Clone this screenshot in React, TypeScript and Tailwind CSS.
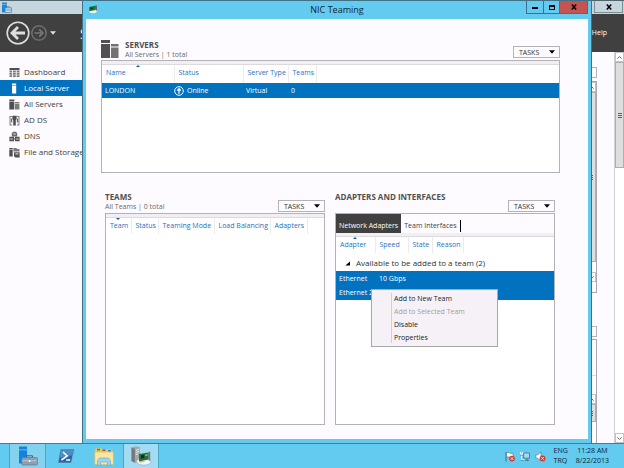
import React, { useState } from "react";

const navItems = [
  { id: "dashboard", label: "Dashboard" },
  { id: "local", label: "Local Server" },
  { id: "all", label: "All Servers" },
  { id: "adds", label: "AD DS" },
  { id: "dns", label: "DNS" },
  { id: "file", label: "File and Storage Services" },
];

const menuItems = [
  { label: "Add to New Team" },
  { label: "Add to Selected Team", disabled: true },
  { label: "Disable" },
  { label: "Properties" },
];

function NavIcon({ id, active }: { id: string; active: boolean }) {
  const fill = active ? "#ffffff" : "#505050";
  return (
    <svg viewBox="0 0 11 11" className="h-[11px] w-[11px] shrink-0" fill={fill} aria-hidden="true">
      {id === "dashboard" && (
        <>
          <path d="M0.5 1h10v2h-10z" />
          <path d="M0.5 3.6h2.6v1.8H0.5zM4 3.6h2.8v1.8H4zM7.7 3.6h2.8v1.8H7.7zM0.5 6h2.6v1.7H0.5zM4 6h2.8v1.7H4zM7.7 6h2.8v1.7H7.7zM0.5 8.3h2.6V10H0.5zM4 8.3h2.8V10H4zM7.7 8.3h2.8V10H7.7z" opacity="0.75" />
        </>
      )}
      {id === "local" && <path d="M3 0.6h4.2v1.6H3zM3 2.8h4.2v7.6H3z" />}
      {id === "all" && (
        <>
          <path d="M0.3 0.6h5v1.3h-5zM0.3 2.5h5v8h-5z" />
          <path d="M6 3h4.4v1.2H6zM6 4.8h4.4v5.7H6z" opacity="0.75" />
        </>
      )}
      {id === "adds" && (
        <>
          <path d="M0.5 1h3v1H1.6v7.4h1.6v1H0.5zM10.5 1h-3v1h1.9v7.4H7.8v1h2.7z" opacity="0.7" />
          <path d="M3.4 0.8h4.2v3.4L6.8 5v5.4H4.2V5l-0.8-0.8z" />
          <path d="M2.2 3.4h1v4h-1zM7.9 3.4h1v4h-1z" />
        </>
      )}
      {id === "dns" && (
        <>
          <path d="M2.8 5.4V2.6L4 0.8h3l1.2 1.8v2.8z" opacity="0.85" />
          <path d="M0.4 5.8h4.6v4.4H0.4zM6 5.8h4.6v4.4H6zM5 7.4h1v1.2H5z" />
          <path d="M1.4 7.4h2.4v1H1.4zM7.2 7.4h2.4v1H7.2zM4.3 2.4h2.4v1H4.3z" fill="#fdfbff" opacity="0.8" />
        </>
      )}
      {id === "file" && (
        <>
          <path d="M0.3 1h3.4v1.2H0.3zM0.3 2.8h3.4v6.8H0.3z" />
          <path d="M4.4 1h3l0.7 1h2.4v2.4H4.4z" opacity="0.75" />
          <path d="M5 5.2h5.6v5.3H6.4L5 9.2z" />
          <path d="M6.4 6.2h3v1.3h-3z" fill="#fdfbff" opacity="0.7" />
        </>
      )}
    </svg>
  );
}

function Caret({ className = "" }: { className?: string }) {
  return (
    <svg viewBox="0 0 6 4" className={`h-1 w-1.5 shrink-0 ${className}`} fill="currentColor" aria-hidden="true">
      <path d="M0 0.3h6L3 3.7z" />
    </svg>
  );
}

function TasksButton() {
  return (
    <button
      type="button"
      aria-haspopup="menu"
      className="flex h-3 w-[47px] items-center justify-between border border-[#b4b2b6] bg-[#fdfbff] pr-1 pl-[5px] text-[7px] leading-none text-[#303030]"
    >
      TASKS
      <Caret className="text-black" />
    </button>
  );
}

interface HeaderCellProps {
  label: string;
  width: string;
  sorted?: "up" | "down";
}

function HeaderCell({ label, width, sorted }: HeaderCellProps) {
  return (
    <th scope="col" className={`relative h-full border-r border-[#ecebee] pt-1 pl-1 text-left align-top font-normal whitespace-nowrap text-[#1f70bb] ${width}`}>
      {label}
      {sorted && (
        <svg viewBox="0 0 4 2" className="absolute top-0 left-1/2 h-[2px] w-1 -translate-x-1/2" fill="#0f5f9f" aria-hidden="true">
          {sorted === "up" ? <path d="M2 0l2 2H0z" /> : <path d="M0 0h4L2 2z" />}
        </svg>
      )}
    </th>
  );
}

// Thin shaded strip between the panel edge and its column headers
function Strip() {
  return <div className="h-1 border-b border-[#dcdadd] bg-[#f1eff3]" />;
}

function ServersPanel() {
  return (
    <section className="pr-7 pl-[15px]">
      <header className="flex h-[21px] items-start">
        <svg viewBox="0 0 18 19" className="mt-px h-[19px] w-[18px]" aria-hidden="true">
          <path d="M0 0h9v3H0zM0 4h9v14H0z" fill="#505050" />
          <path d="M10 4h7.5v2.4H10zM10 7.4h7.5V18H10z" fill="#727272" />
        </svg>
        <div className="ml-1.5 flex-1">
          <h2 className="text-[8px] leading-[11px] font-bold text-[#505050]">SERVERS</h2>
          <p className="text-[7px] leading-[10px] text-[#6a6a6a]">All Servers | 1 total</p>
        </div>
        <div className="self-end pb-[2px]">
          <TasksButton />
        </div>
      </header>
      <div className="h-[113px] border border-[#b4b2b6] bg-white">
        <Strip />
        <table className="w-full table-fixed border-collapse text-[7px] leading-none">
          <thead>
            <tr className="h-[18px]">
              <HeaderCell label="Name" width="w-[72px]" sorted="up" />
              <HeaderCell label="Status" width="w-[69px]" />
              <HeaderCell label="Server Type" width="w-[45px]" />
              <HeaderCell label="Teams" width="w-[28px]" />
              <th />
            </tr>
          </thead>
          <tbody>
            <tr className="h-[15px] bg-[#0072c0] text-white">
              <td className="pl-[3px]">LONDON</td>
              <td>
                <span className="flex items-center gap-[3px]">
                  <svg viewBox="0 0 10 10" className="h-[10px] w-[10px]" fill="none" stroke="#fff" aria-hidden="true">
                    <circle cx="5" cy="5" r="4.3" strokeWidth="1" />
                    <path d="M5 7.8V3M3.2 4.6L5 2.7l1.8 1.9" strokeWidth="1.3" />
                  </svg>
                  Online
                </span>
              </td>
              <td className="pl-[3px]">Virtual</td>
              <td className="pl-[3px]">0</td>
              <td />
            </tr>
          </tbody>
        </table>
      </div>
    </section>
  );
}

function TeamsPanel() {
  return (
    <section className="flex min-w-0 flex-1 flex-col">
      <header className="flex h-[22px] items-start justify-between">
        <div>
          <h2 className="text-[8px] leading-[11px] font-bold text-[#505050]">TEAMS</h2>
          <p className="text-[7px] leading-[10px] text-[#6a6a6a]">All Teams | 0 total</p>
        </div>
        <div className="self-end pb-px">
          <TasksButton />
        </div>
      </header>
      <div className="flex-1 border border-[#b4b2b6] bg-white">
        <Strip />
        <table className="w-full table-fixed border-collapse text-[7px] leading-none">
          <thead>
            <tr className="h-4">
              <HeaderCell label="Team" width="w-[25px]" sorted="down" />
              <HeaderCell label="Status" width="w-[27px]" />
              <HeaderCell label="Teaming Mode" width="w-[56px]" />
              <HeaderCell label="Load Balancing" width="w-[56px]" />
              <HeaderCell label="Adapters" width="w-[37px]" />
              <th />
            </tr>
          </thead>
        </table>
      </div>
    </section>
  );
}

function AdapterMenu() {
  return (
    <div role="menu" className="absolute top-[52px] left-[35px] flex w-[127px] border border-[#a9a7ab] bg-[#f6f1f6] py-0.5">
      <div className="my-px w-5 border-r border-[#d2ced3]" />
      <div className="flex flex-1 flex-col">
        {menuItems.map((item) => (
          <button
            key={item.label}
            type="button"
            role="menuitem"
            disabled={item.disabled}
            className="h-[13px] pl-0.5 text-left text-[7px] leading-[13px] text-[#1c1c1c] disabled:text-[#a09da2]"
          >
            {item.label}
          </button>
        ))}
      </div>
    </div>
  );
}

function AdaptersPanel() {
  const [tab, setTab] = useState("Network Adapters");
  return (
    <section className="flex min-w-0 flex-1 flex-col">
      <header className="flex h-[22px] items-start justify-between">
        <h2 className="text-[8px] leading-[11px] font-bold whitespace-nowrap text-[#505050]">ADAPTERS AND INTERFACES</h2>
        <div className="self-end pb-px">
          <TasksButton />
        </div>
      </header>
      <div className="flex-1 border border-[#b4b2b6] bg-white">
        <div role="tablist" className="flex h-[19px] items-stretch bg-[#fdfbff] text-[7px] leading-none">
          {["Network Adapters", "Team Interfaces"].map((name) => (
            <button
              key={name}
              type="button"
              role="tab"
              aria-selected={tab === name}
              onClick={() => setTab(name)}
              className="px-[3px] pt-1 whitespace-nowrap text-[#404040] aria-selected:bg-[#404040] aria-selected:text-white"
            >
              {name}
            </button>
          ))}
          <span className="mt-1.5 h-3 w-px bg-black" />
        </div>
        <Strip />
        <div className="relative">
          <table className="w-full table-fixed border-collapse text-[7px] leading-none">
            <thead>
              <tr className="h-4">
                <HeaderCell label="Adapter" width="w-[39px]" sorted="up" />
                <HeaderCell label="Speed" width="w-[33px]" />
                <HeaderCell label="State" width="w-[24px]" />
                <HeaderCell label="Reason" width="w-[31px]" />
                <th />
              </tr>
            </thead>
            <tbody>
              <tr className="h-[18px]">
                <td colSpan={5} className="pt-0.5 pl-[9px]">
                  <span className="flex items-center gap-1.5 text-[8px] whitespace-nowrap text-[#303030]">
                    <svg viewBox="0 0 5 5" className="h-[5px] w-[5px]" fill="#000" aria-hidden="true">
                      <path d="M5 0.4V4.6H0.4z" />
                    </svg>
                    Available to be added to a team (2)
                  </span>
                </td>
              </tr>
              <tr className="h-[14px] bg-[#0072c0] text-white">
                <td className="pl-[3px]">Ethernet</td>
                <td colSpan={4} className="pl-1">10 Gbps</td>
              </tr>
              <tr className="h-[15px] bg-[#0072c0] text-white">
                <td className="pl-[3px] whitespace-nowrap">Ethernet 2</td>
                <td colSpan={4} />
              </tr>
            </tbody>
          </table>
          <AdapterMenu />
        </div>
      </div>
    </section>
  );
}

function TeamingWindow() {
  return (
    <div role="dialog" aria-label="NIC Teaming" className="absolute inset-y-0 right-8 left-[82px] flex flex-col border-x border-t border-[#3f7285] bg-[#63cbf0] px-[3px] pb-1">
      <div className="flex h-[18px] items-start">
        <svg viewBox="0 0 12 12" className="mt-[3px] ml-[2px] h-[10px] w-[10px]" aria-hidden="true">
          <ellipse cx="6" cy="8.4" rx="5" ry="3" fill="#f2f7f4" stroke="#8aa" strokeWidth="0.5" />
          <path d="M1.4 3.6l8-1.8v5.4l-8 1.4z" fill="#1d7a35" />
          <path d="M9.4 1.4l1.2 0.4v6.4l-1.2-0.6z" fill="#556" />
          <path d="M3 4.6l3-0.6v2.4L3 7z" fill="#0a3d18" />
        </svg>
        <h1 className="flex-1 pl-20 text-center text-[9px] leading-[18px] text-[#15232b]">NIC Teaming</h1>
        <div className="ml-[30px] flex h-[13px] w-[62px] border border-t-0 border-[#3f7285]">
          <button type="button" aria-label="Minimize" className="flex w-[17px] items-center justify-center border-r border-[#3f7285] pt-0.5">
            <span className="h-0.5 w-1.5 bg-black" />
          </button>
          <button type="button" aria-label="Maximize" className="flex w-4 items-center justify-center border-r border-[#3f7285]">
            <span className="h-[5px] w-1.5 border border-t-2 border-black" />
          </button>
          <button type="button" aria-label="Close" className="flex flex-1 items-center justify-center bg-[#c75350]">
            <CloseGlyph />
          </button>
        </div>
      </div>
      <main className="flex flex-1 flex-col bg-[#fdfbff] pt-5 pb-3.5">
        <ServersPanel />
        <div className="mt-[18px] flex flex-1 gap-2.5 pr-[33px] pl-[19px]">
          <TeamsPanel />
          <AdaptersPanel />
        </div>
      </main>
    </div>
  );
}

function CloseGlyph() {
  return (
    <svg viewBox="0 0 6 6" className="h-1.5 w-1.5" stroke="#000" strokeWidth="1.5" aria-hidden="true">
      <path d="M0.8 0.5l4.4 5M5.2 0.5l-4.4 5" />
    </svg>
  );
}

function ArrowCap({ down = false }: { down?: boolean }) {
  return (
    <div className="flex h-[10px] shrink-0 items-center justify-center border border-[#c4c2c6] bg-white">
      <svg viewBox="0 0 5 3" className="h-[3px] w-[5px]" fill="none" stroke="#606060" aria-hidden="true">
        {down ? <path d="M0.4 0.4l2.1 2 2.1-2" /> : <path d="M0.4 2.6l2.1-2 2.1 2" />}
      </svg>
    </div>
  );
}

function Thumb({ className }: { className: string }) {
  return (
    <div className={`flex shrink-0 flex-col items-center justify-center gap-px border border-[#b0aeb2] bg-[#dedede] ${className}`}>
      <span className="h-px w-1 bg-[#606060]" />
      <span className="h-px w-1 bg-[#606060]" />
      <span className="h-px w-1 bg-[#606060]" />
    </div>
  );
}

function ServerManager() {
  const [selected, setSelected] = useState("local");
  return (
    <div className="flex h-full flex-col bg-[#fdfbff]">
      <div className="flex h-3.5 items-start justify-between border-t border-[#51656f] bg-[#c6d6df]">
        <svg viewBox="0 0 11 11" className="mt-px ml-px h-[11px] w-[11px]" aria-hidden="true">
          <path d="M1 0.5h5v2H1zM1 3h5v7.5H1z" fill="#1a86d9" />
          <path d="M4 5.8h6.5v4.7H4z" fill="#c9dbe6" stroke="#4d7fa3" strokeWidth="0.7" />
          <path d="M5.8 5.8V4.7h2.8v1.1M4 8h6.5" fill="none" stroke="#4d7fa3" strokeWidth="0.7" />
        </svg>
        <button type="button" aria-label="Close Server Manager" className="mr-px flex h-3 w-[29px] items-center justify-center border border-t-0 border-[#7f8d95]">
          <CloseGlyph />
        </button>
      </div>
      <div className="flex h-[38px] items-center bg-[#404040] text-white">
        <button type="button" aria-label="Back" className="ml-1.5">
          <svg viewBox="0 0 24 24" className="h-6 w-6" fill="none" stroke="#dedede" aria-hidden="true">
            <circle cx="12" cy="12" r="10.8" strokeWidth="1.6" />
            <path d="M19 12H6.5M12 6l-6 6 6 6" strokeWidth="2.8" />
          </svg>
        </button>
        <button type="button" aria-label="Forward" className="ml-px">
          <svg viewBox="0 0 16 16" className="h-4 w-4" fill="none" stroke="#777" aria-hidden="true">
            <circle cx="8" cy="8" r="7.2" strokeWidth="1.3" />
            <path d="M3.6 8h8M8.2 4.4L11.8 8l-3.6 3.6" strokeWidth="1.7" />
          </svg>
        </button>
        <Caret className="ml-[3px] text-[#dedede]" />
        <h1 className="ml-6 min-w-0 flex-1 overflow-hidden text-[14px] whitespace-nowrap">Server Manager</h1>
        <button type="button" className="mr-[17px] text-[7px]">Help</button>
      </div>
      <div className="flex min-h-0 flex-1">
        <nav className="w-[120px] pt-3">
          {navItems.map((item) => (
            <button
              key={item.id}
              type="button"
              onClick={() => setSelected(item.id)}
              className={`flex h-4 w-full items-center gap-1 pl-[9px] text-[8px] leading-none whitespace-nowrap ${
                item.id === selected ? "bg-[#0072c0] text-white" : "text-[#404040]"
              }`}
            >
              <NavIcon id={item.id} active={item.id === selected} />
              {item.label}
            </button>
          ))}
        </nav>
        <div className="flex flex-1 flex-col items-end overflow-hidden pt-[15px] pr-[17px]">
          <button type="button" aria-label="Tasks" className="flex h-[11px] w-[47px] shrink-0 items-center justify-end border border-[#b4b2b6] pr-1 text-black">
            <Caret />
          </button>
          <div className="mt-[3px] flex h-[212px] w-[400px] shrink-0 justify-end border border-[#a9a7ab]">
            <div className="flex w-2.5 flex-col">
              <ArrowCap />
              <Thumb className="h-[170px]" />
              <div className="h-2.5 bg-white" />
              <ArrowCap down />
            </div>
          </div>
          <button type="button" aria-label="Tasks" className="mt-[33px] flex h-[11px] w-[47px] shrink-0 items-center justify-end border border-[#b4b2b6] pr-1 text-black">
            <Caret />
          </button>
          <div className="mt-[2px] flex w-[400px] flex-1 flex-col items-end border border-b-0 border-[#a9a7ab]">
            <div className="h-9 w-full shrink-0 border-b border-[#dcdadd]" />
            <div className="flex w-2.5 flex-1 flex-col bg-white pt-[18px]">
              <ArrowCap />
              <Thumb className="h-[18px]" />
            </div>
          </div>
        </div>
        <div className="flex w-2.5 flex-col border-l border-[#d2d0d4] bg-white">
          <ArrowCap />
          <Thumb className="h-[106px]" />
          <div className="flex-1" />
          <ArrowCap down />
        </div>
      </div>
    </div>
  );
}

function Taskbar() {
  return (
    <footer className="flex h-[25px] shrink-0 items-stretch border-t border-[#417d93] bg-[#63cbf0]">
      <button type="button" aria-label="Start" className="w-[10px] border-r border-[#4aa5c5]" />
      <button type="button" aria-label="Server Manager" className="flex w-9 items-center justify-center border-r border-[#4aa5c5] bg-[#83d3ef]">
        <svg viewBox="0 0 20 20" className="h-5 w-5" aria-hidden="true">
          <path d="M1 0.5h8v3H1zM1 4.3h8v13.2H1z" fill="#1583dc" />
          <path d="M8.5 11.5V9.8h6v1.7" fill="none" stroke="#445c70" />
          <rect x="3.8" y="11.5" width="15.7" height="7.5" rx="1" fill="#8ba0b3" stroke="#5d7a92" strokeWidth="0.7" />
          <path d="M4 14.8h15" stroke="#c3d3df" strokeWidth="0.8" />
          <path d="M10.7 14h1.8v2h-1.8z" fill="#e8eef2" />
        </svg>
      </button>
      <button type="button" aria-label="Windows PowerShell" className="flex w-[39px] items-center justify-center">
        <svg viewBox="0 0 18 16" className="h-4 w-[18px]" aria-hidden="true">
          <path d="M3.6 1h13.6l-2.8 14H0.8z" fill="#2469a4" stroke="#8dbbe0" strokeWidth="0.7" />
          <path d="M3.6 1h13.6L16 7 2 10z" fill="#4b8cc4" />
          <path d="M6 4l4.2 3.9L4.4 12M9.2 12h4" fill="none" stroke="#fff" strokeWidth="1.6" />
        </svg>
      </button>
      <button type="button" aria-label="File Explorer" className="flex w-[38px] items-center justify-center">
        <svg viewBox="0 0 20 19" className="h-[19px] w-5" aria-hidden="true">
          <path d="M0.8 3l1-1.8h5.5l1 1.4h10.2V17H0.8z" fill="#e9c85c" />
          <path d="M3 1.8h3v1.6H3z" fill="#2a9b49" />
          <path d="M8.5 2.4h3V4h-3z" fill="#d34b3a" />
          <path d="M14 3h3v1.5h-3z" fill="#3c7fd0" />
          <path d="M0.8 5h18.6v12.5H0.8z" fill="#f9e7a0" stroke="#d6b04a" strokeWidth="0.5" />
          <path d="M3.5 18.5v-5l2-2.5h9l2 2.5v5h-3V15h-7v3.5z" fill="#9ed4f0" stroke="#5fa4cc" strokeWidth="0.6" />
        </svg>
      </button>
      <button type="button" aria-label="NIC Teaming" className="flex w-9 items-center justify-center border-x border-[#4aa5c5] bg-[#a3dcf0]">
        <svg viewBox="0 0 22 20" className="h-5 w-[22px]" aria-hidden="true">
          <path d="M1.5 1.6l4.5-1.4 4 1V14l-5 3-3.5-2z" fill="#a2a8ab" />
          <path d="M1.5 1.6l3.4 1.1v14L1.5 15z" fill="#74797c" />
          <path d="M5.8 4.2l3.4-1M5.8 6.4l3.4-1M5.8 8.6l2-0.6" stroke="#eceff0" />
          <ellipse cx="13.8" cy="15.6" rx="7.2" ry="3.6" fill="#eef6fa" stroke="#7fb2cc" strokeWidth="0.7" />
          <path d="M9 8l9.6-1.4v7l-9.6 1.8z" fill="#2c6e36" />
          <path d="M11 9.2l3.2-0.5v3.4l-3.2 0.6z" fill="#12301a" />
          <path d="M15.4 8.4l2-0.3v1.6l-2 0.3z" fill="#9cc79a" />
          <path d="M9.4 15.4l5-0.9v1.3l-5 0.9z" fill="#e0b63d" />
          <path d="M18.6 5.6l1.6 0.5v9l-1.6-0.8z" fill="#6f7477" />
        </svg>
      </button>
      <div className="flex-1" />
      <div className="flex items-center gap-[5px]">
        <svg viewBox="0 0 10 11" className="h-[11px] w-[10px]" aria-hidden="true">
          <path d="M1 1v9.5" stroke="#4d6b78" strokeWidth="1" />
          <path d="M1.5 1.4h2.8l0.8 0.9h3v4.4H5L4.2 6H1.5z" fill="#f7fbfd" stroke="#4d6b78" strokeWidth="0.6" />
          <circle cx="7" cy="7.6" r="2.9" fill="#d8392f" />
          <path d="M5.8 6.4l2.4 2.4M8.2 6.4L5.8 8.8" stroke="#fff" strokeWidth="0.9" />
        </svg>
        <svg viewBox="0 0 10 11" className="h-[11px] w-[10px]" fill="none" stroke="#4d6b78" aria-hidden="true">
          <path d="M3.6 2h5.9v5.2H3.6z" fill="#9fdcf2" strokeWidth="0.8" />
          <path d="M5 9.4h4M7 7.2v2.2" strokeWidth="0.9" />
          <path d="M0.6 1v2.2h2V1M1.6 3.2v5.4h2.6" stroke="#f0f8fb" strokeWidth="1" />
          <path d="M0.5 4.3h2.2M0.8 9.4h3" strokeWidth="0.6" />
        </svg>
        <svg viewBox="0 0 11 11" className="h-[11px] w-[11px]" aria-hidden="true">
          <path d="M0.8 3.8h1.8L6 1v9L2.6 7.2H0.8z" fill="#f7fbfd" stroke="#4d6b78" strokeWidth="0.6" />
          <circle cx="7.6" cy="7.4" r="2.9" fill="#d8392f" />
          <path d="M6.4 6.2l2.4 2.4M8.8 6.2L6.4 8.6" stroke="#fff" strokeWidth="0.9" />
        </svg>
      </div>
      <div className="ml-2 pt-[2px] text-[7px] leading-[10px] text-[#10242d]">
        <div>ENG</div>
        <div>TRQ</div>
      </div>
      <div className="mr-[15px] ml-2 pt-[2px] text-center text-[7px] leading-[10px] text-[#10242d]">
        <div>11:28 AM</div>
        <div>8/22/2013</div>
      </div>
    </footer>
  );
}

export default function App() {
  return (
    <div className="flex h-screen flex-col overflow-hidden font-['Open_Sans','Noto_Sans',sans-serif]">
      <div className="relative min-h-0 flex-1">
        <ServerManager />
        <TeamingWindow />
      </div>
      <Taskbar />
    </div>
  );
}
